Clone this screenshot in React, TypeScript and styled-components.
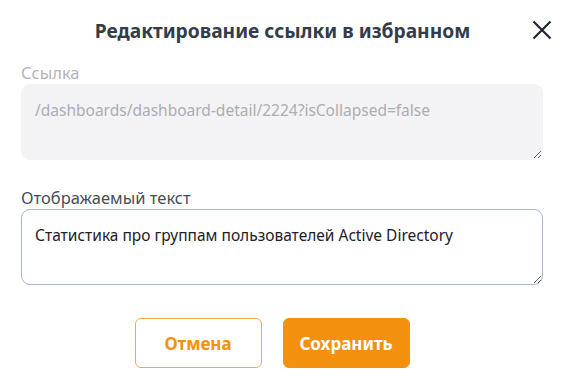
import React from "react";
import styled, { createGlobalStyle } from "styled-components";

const Global = createGlobalStyle`
  html, body { margin: 0; padding: 0; background: #ffffff; }
  body { font-family: "Noto Sans", "Open Sans", sans-serif; }
  * { box-sizing: border-box; }
`;

const Dialog = styled.div`
  width: 576px;
  height: 385px;
  background: #ffffff;
  display: flex;
  flex-direction: column;
  padding: 0 24px 0 21px;
`;

const Header = styled.div`
  display: flex;
  align-items: center;
  height: 62px;
  padding-bottom: 2px;
`;

const Title = styled.h2`
  flex: 1;
  margin: 0;
  text-align: center;
  font-size: 19.2px;
  font-weight: 700;
  color: #323c4b;
  padding-left: 12px;
`;

const Close = styled.button`
  width: 20px;
  height: 20px;
  padding: 0;
  border: none;
  background: transparent;
  display: flex;
  align-items: center;
  justify-content: center;
  cursor: pointer;
`;

const Field = styled.label`
  display: flex;
  flex-direction: column;
  gap: 1px;
  margin-bottom: 27px;
`;

const Label = styled.span<{ $muted?: boolean }>`
  font-size: 16.5px;
  line-height: 21px;
  color: ${(p) => (p.$muted ? "#b4b4b8" : "#474d57")};
`;

const Area = styled.textarea<{ $disabled?: boolean }>`
  width: 522px;
  height: 76px;
  margin: 0;
  padding: 15px 13px;
  font-family: "Noto Sans", "Open Sans", sans-serif;
  font-size: 15.5px;
  line-height: 20px;
  border-radius: 9px;
  outline: none;
  color: ${(p) => (p.$disabled ? "#abadb2" : "#1e2126")};
  background: ${(p) => (p.$disabled ? "#f3f3f5" : "#ffffff")};
  border: 1px solid ${(p) => (p.$disabled ? "#f3f3f5" : "#aab8cc")};
`;

const Actions = styled.div`
  display: flex;
  justify-content: center;
  gap: 21px;
  margin-top: 6px;
  padding-right: 29px;
`;

const Button = styled.button<{ $primary?: boolean }>`
  width: 127px;
  height: 50px;
  border-radius: 6px;
  font-family: "Noto Sans", "Open Sans", sans-serif;
  font-size: 17px;
  font-weight: 700;
  cursor: pointer;
  color: ${(p) => (p.$primary ? "#ffffff" : "#f39110")};
  background: ${(p) => (p.$primary ? "#f3910f" : "#ffffff")};
  border: 1px solid ${(p) => (p.$primary ? "#f3910f" : "#f6a945")};
`;

export default function App() {
  return (
    <>
      <Global />
      <Dialog>
        <Header>
          <Title>Редактирование ссылки в избранном</Title>
          <Close aria-label="Закрыть">
            <svg width="20" height="20" viewBox="0 0 20 20">
              <path d="M1.5 1.5 L18.5 18.5 M18.5 1.5 L1.5 18.5" stroke="#1f2631" strokeWidth="2.2" />
            </svg>
          </Close>
        </Header>
        <Field>
          <Label $muted>Ссылка</Label>
          <Area $disabled readOnly defaultValue="/dashboards/dashboard-detail/2224?isCollapsed=false" />
        </Field>
        <Field>
          <Label>Отображаемый текст</Label>
          <Area defaultValue="Статистика про группам пользователей Active Directory" />
        </Field>
        <Actions>
          <Button>Отмена</Button>
          <Button $primary>Сохранить</Button>
        </Actions>
      </Dialog>
    </>
  );
}
